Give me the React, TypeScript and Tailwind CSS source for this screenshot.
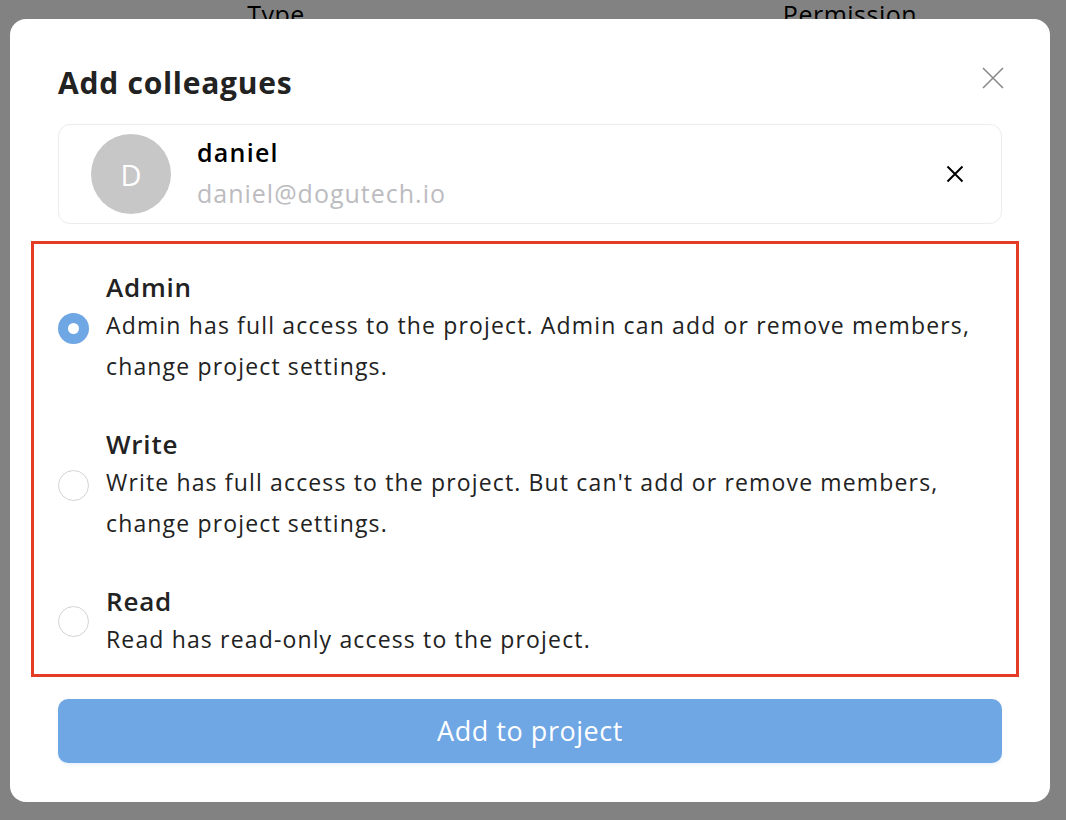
import { useState } from "react";

const roles = [
  {
    id: "admin",
    title: "Admin",
    desc: "Admin has full access to the project. Admin can add or remove members, change project settings.",
  },
  {
    id: "write",
    title: "Write",
    desc: "Write has full access to the project. But can't add or remove members, change project settings.",
  },
  {
    id: "read",
    title: "Read",
    desc: "Read has read-only access to the project.",
  },
];

function CloseIcon({ className, strokeWidth }: { className?: string; strokeWidth: number }) {
  return (
    <svg viewBox="0 0 24 24" className={className} fill="none" stroke="currentColor" strokeWidth={strokeWidth} strokeLinecap="butt">
      <path d="M2 2L22 22M22 2L2 22" />
    </svg>
  );
}

export default function App() {
  const [role, setRole] = useState("admin");

  return (
    <div className="relative h-screen w-full overflow-hidden bg-white font-['Open_Sans','Lato',sans-serif] text-[#222]">
      {/* page behind the dialog, its header is partly hidden by the dialog */}
      <div className="flex h-[44px] items-start text-[25px] font-medium leading-[28px] tracking-[0.02em] text-black">
        <div className="w-[552px] shrink-0 text-center">Type</div>
        <div className="w-[148px] shrink-0" />
        <div className="w-[300px] shrink-0 text-center">Permission</div>
      </div>

      {/* backdrop */}
      <div className="absolute inset-0 bg-black/[0.49]" />

      {/* dialog */}
      <div className="absolute left-[10px] top-[19px] flex h-[783px] w-[1040px] flex-col rounded-[16px] bg-white px-[48px] pt-[44px]">
        <div className="flex items-start justify-between">
          <h2 className="text-[30px] font-bold leading-[40px] tracking-[0.025em] text-[#222]">Add colleagues</h2>
          <button className="mr-[-3px] mt-[3px] text-[#8a8a8a]">
            <CloseIcon className="h-[24px] w-[24px]" strokeWidth={1.6} />
          </button>
        </div>

        <div className="mt-[21px] flex h-[100px] items-center rounded-[12px] border border-[#ececec] pl-[32px] pr-[37px]">
          <div className="flex h-[80px] w-[80px] items-center justify-center rounded-full bg-[#c7c7c7] text-[29px] leading-none text-white">D</div>
          <div className="ml-[26px] flex flex-1 flex-col">
            <span className="text-[25px] font-semibold leading-[38px] tracking-[0.05em] text-black">daniel</span>
            <span className="text-[25px] leading-[44px] tracking-[0.04em] text-[#bcbcc0]">daniel@dogutech.io</span>
          </div>
          <button className="text-black">
            <CloseIcon className="h-[18px] w-[18px]" strokeWidth={2.6} />
          </button>
        </div>

        <div className="mt-[45px] flex flex-col gap-[39px]">
          {roles.map((r) => {
            const active = role === r.id;
            return (
              <label key={r.id} className="flex cursor-pointer items-center" onClick={() => setRole(r.id)}>
                <span
                  className={
                    active
                      ? "flex h-[31px] w-[31px] shrink-0 items-center justify-center rounded-full bg-[#6fa6e4]"
                      : "flex h-[31px] w-[31px] shrink-0 items-center justify-center rounded-full border-[1.5px] border-[#d4d4d4] bg-white"
                  }
                >
                  {active && <span className="h-[11px] w-[11px] rounded-full bg-white" />}
                </span>
                <div className="ml-[17px] flex-1 pr-[20px]">
                  <div className="text-[26px] font-semibold leading-[36px] tracking-[0.03em] text-[#222]">{r.title}</div>
                  <div className="text-[23px] leading-[41px] tracking-[0.05em] text-[#222]">{r.desc}</div>
                </div>
              </label>
            );
          })}
        </div>

        <button className="mt-auto mb-[39px] h-[64px] w-full rounded-[10px] bg-[#6fa6e4] text-[27px] tracking-[0.02em] text-white shadow-[0_2px_3px_rgba(111,166,228,0.15)]">
          Add to project
        </button>
      </div>

      {/* annotation */}
      <div className="pointer-events-none absolute left-[31px] top-[241px] h-[436px] w-[988px] border-[3px] border-[#e43b25]" />
    </div>
  );
}
